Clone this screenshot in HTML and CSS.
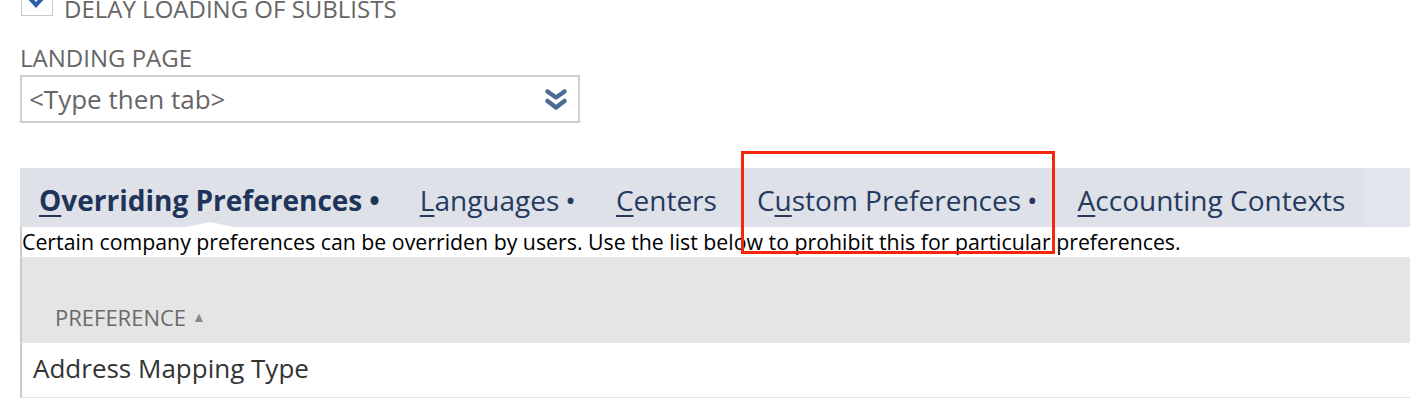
FILE: index.html
```html
<!DOCTYPE html>
<html lang="en">
<head>
    <meta charset="UTF-8">
    <meta name="viewport" content="width=device-width, initial-scale=1.0">
    <title>Set Preferences</title>
    <link rel="stylesheet" href="styles.css">
</head>
<body>
    <div class="page">
        <div class="check-row">
            <span class="checkbox">
                <svg width="32" height="32" viewBox="0 0 32 32"><path d="M5 13 L15 24 L27 11 L23 9 L15 18 L9 10 Z" fill="#2c5ea6"/></svg>
            </span>
            <span class="check-label">DELAY LOADING OF SUBLISTS</span>
        </div>

        <div class="field">
            <label class="field-label">LANDING PAGE</label>
            <div class="select-box">
                <span class="placeholder">&lt;Type then tab&gt;</span>
                <svg class="chevrons" width="24" height="24" viewBox="0 0 24 24">
                    <path d="M3.5 3.5 L12 9.5 L20.5 3.5" fill="none" stroke="#4c6b94" stroke-width="4.5" stroke-linejoin="round" stroke-linecap="round"/>
                    <path d="M3.5 13 L12 19.5 L20.5 13" fill="none" stroke="#4c6b94" stroke-width="4.5" stroke-linejoin="round" stroke-linecap="round"/>
                </svg>
            </div>
        </div>

        <div class="tab-strip">
            <div class="tabs">
                <a class="tab active"><u>O</u>verriding Preferences<span class="dot">•</span></a>
                <a class="tab"><u>L</u>anguages<span class="dot">•</span></a>
                <a class="tab"><u>C</u>enters</a>
                <a class="tab">C<u>u</u>stom Preferences<span class="dot">•</span></a>
                <a class="tab"><u>A</u>ccounting Contexts</a>
            </div>
        </div>

        <div class="tab-body">
            <p class="help">Certain company preferences can be overriden by users. Use the list below to prohibit this for particular preferences.</p>
            <div class="list">
                <div class="list-head">
                    <span>PREFERENCE</span>
                    <span class="sort">▲</span>
                </div>
                <div class="list-row">Address Mapping Type</div>
            </div>
        </div>

        <div class="highlight"></div>
    </div>
</body>
</html>
```

FILE: styles.css
```css
body {
    font-family: "Open Sans", "Liberation Sans", sans-serif;
    background-color: #ffffff;
    margin: 0;
    overflow: hidden;
}
.page {
    position: relative;
    padding-left: 20px;
}
.check-row {
    display: flex;
    align-items: flex-end;
    gap: 11px;
    margin-top: -16px;
}
.checkbox {
    width: 32px;
    height: 32px;
    border: 1px solid #c8c8c8;
    box-sizing: border-box;
    display: block;
    margin-left: 1px;
}
.checkbox svg {
    display: block;
    margin: -1px;
}
.check-label {
    font-size: 24px;
    line-height: 18px;
    color: #666666;
    margin-bottom: -2px;
}
.field {
    margin-top: 28px;
}
.field-label {
    display: block;
    font-size: 24px;
    line-height: 28px;
    color: #666666;
}
.select-box {
    width: 539px;
    height: 44px;
    border: 2px solid #cfcfcf;
    display: flex;
    align-items: center;
    justify-content: space-between;
    padding: 0 10px 0 7px;
    margin-top: 3px;
}
.placeholder {
    font-size: 26px;
    color: #666666;
}
.chevrons {
    display: block;
    margin-top: 1px;
}
.tab-strip {
    margin-top: 45px;
    background-color: #e1e6ee;
    height: 59px;
}
.tabs {
    display: inline-flex;
    background-color: #dee1e8;
    height: 59px;
}
.tab {
    font-size: 28px;
    color: #253a5e;
    padding: 5px 20px 0;
    position: relative;
    line-height: 54px;
    white-space: nowrap;
}
.tab .dot {
    margin-left: 6px;
}
.tab u {
    text-decoration-thickness: 2px;
    text-underline-offset: 4px;
}
.tab.active {
    font-weight: bold;
    color: #1f3459;
    padding-left: 19px;
}
.tab.active .dot {
    margin-left: 7px;
}
.tab.active::after {
    content: "";
    position: absolute;
    bottom: 0;
    left: 50%;
    margin-left: -24px;
    border-left: 24px solid transparent;
    border-right: 24px solid transparent;
    border-bottom: 5px solid #ffffff;
}
.tab-body {
    border-left: 2px solid #cccccc;
}
.help {
    margin: 0;
    font-size: 21.3px;
    color: #000000;
    line-height: 30px;
}
.list-head {
    background-color: #e5e5e5;
    height: 86px;
    display: flex;
    align-items: flex-end;
    gap: 6px;
    padding: 0 0 14px 33px;
    box-sizing: border-box;
    font-size: 22px;
    line-height: 24px;
    color: #6a6a6a;
}
.list-head .sort {
    font-size: 14px;
    line-height: 14px;
    color: #8a8a8a;
    padding-bottom: 5px;
}
.list-row {
    height: 54px;
    line-height: 50px;
    padding-left: 11px;
    font-size: 26px;
    color: #333333;
    border-bottom: 1px solid #e2e2e2;
}
.highlight {
    position: absolute;
    left: 741px;
    top: 167px;
    width: 308px;
    height: 97px;
    border: 3px solid #f5260b;
}
```
